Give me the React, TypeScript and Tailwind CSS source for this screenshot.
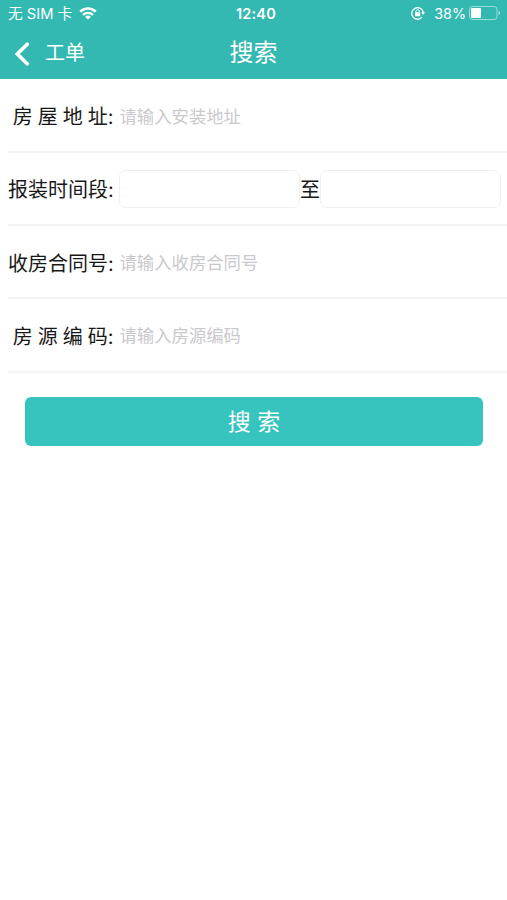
import React, { useState } from 'react';

function WifiIcon() {
  return (
    <svg viewBox="0 0 18 13" className="w-[18px] h-[13px]" fill="none" stroke="white" strokeWidth="2.4">
      <path d="M1.2 4.7a11 11 0 0 1 15.6 0" />
      <path d="M4 7.9a7.1 7.1 0 0 1 10 0" />
      <path d="M9 12.6 6.2 9.9a4 4 0 0 1 5.6 0Z" fill="white" stroke="none" />
    </svg>
  );
}

function RotationLockIcon() {
  return (
    <svg viewBox="0 0 14 14" className="w-[14px] h-[14px]" fill="none" stroke="white">
      <path d="M11 11.2a5.8 5.8 0 1 1 1.3-4.6" strokeWidth="1.3" />
      <path d="M10.2 6.2H14l-1.9 2.8Z" fill="white" stroke="none" />
      <rect x="4" y="6.2" width="5.2" height="4" rx="0.5" fill="white" stroke="none" />
      <path d="M5 6.4V5.2a1.6 1.6 0 0 1 3.2 0v1.2" strokeWidth="1" />
    </svg>
  );
}

function BatteryIcon() {
  return (
    <svg viewBox="0 0 32 14" className="w-8 h-[14px]" fill="none">
      <rect x="0.5" y="0.5" width="27.5" height="13" rx="3" stroke="white" strokeOpacity="0.5" />
      <rect x="2" y="2" width="10" height="10" rx="1" fill="white" />
      <path d="M29.6 4.8c1.8.6 1.8 3.8 0 4.4Z" fill="white" fillOpacity="0.6" />
    </svg>
  );
}

function StatusBar() {
  return (
    <div className="grid grid-cols-3 items-center h-[27px] pl-2 pr-[6px] text-[14.5px] leading-none">
      <div className="flex items-center gap-[7px]">
        <span className="pt-[2px] text-[14.7px] whitespace-pre">无 SIM 卡</span>
        <WifiIcon />
      </div>
      <span className="pl-[3px] pt-[2px] text-center font-semibold tracking-[0.2px]">12:40</span>
      <div className="flex items-center justify-end">
        <RotationLockIcon />
        <span className="ml-[9px] mr-[3px] pt-[2px] text-[14.3px]">38%</span>
        <BatteryIcon />
      </div>
    </div>
  );
}

interface RowProps {
  label: string;
  children: React.ReactNode;
}

function Row({ label, children }: RowProps) {
  return (
    <div className="ml-2 h-[73.3px] flex items-center border-b-2 border-[#f4f4f4]">
      <label className="w-[105.5px] shrink-0 pt-1 text-right text-[20px] leading-7 whitespace-pre [word-spacing:-0.6px]">{label}</label>
      {children}
    </div>
  );
}

const inputClass = 'ml-[6px] flex-1 min-w-0 h-9 pt-[2px] text-[17.35px] outline-none placeholder:text-[#c9c9cd]';
const dateClass = 'mt-px w-[181px] h-[38px] px-2 rounded-[7px] border-[1.5px] border-[#f0f0f0] text-[17px] outline-none';

export default function App() {
  const [address, setAddress] = useState('');
  const [start, setStart] = useState('');
  const [end, setEnd] = useState('');
  const [contract, setContract] = useState('');
  const [code, setCode] = useState('');

  return (
    <div className="min-h-screen bg-white text-[#181818] font-[Inter,'Noto_Sans_CJK_SC',sans-serif]">
      <header className="h-[79px] bg-[#33b9b1] text-white">
        <StatusBar />
        <div className="grid grid-cols-3 items-center h-[52px] pl-[15px] pr-[15px]">
          <button className="flex items-center gap-[15px] text-[20px] leading-none">
            <svg viewBox="0 0 15 24" className="w-[15px] h-6 mt-px" fill="none" stroke="white" strokeWidth="3.6" strokeLinecap="round">
              <path d="M12.2 2.2 2.4 12l9.8 9.8" />
            </svg>
            工单
          </button>
          <h1 className="pb-px text-center text-[24px] leading-none">搜索</h1>
        </div>
      </header>

      <form onSubmit={(e) => e.preventDefault()} className="pt-[0.4px]">
        <Row label="房 屋 地 址:">
          <input className={inputClass} value={address} onChange={(e) => setAddress(e.target.value)} placeholder="请输入安装地址" />
        </Row>
        <Row label="报装时间段:">
          <div className="ml-[5.5px] flex items-center">
            <input className={dateClass} value={start} onChange={(e) => setStart(e.target.value)} />
            <span className="pt-1 text-[20px] leading-7">至</span>
            <input className={dateClass} value={end} onChange={(e) => setEnd(e.target.value)} />
          </div>
        </Row>
        <Row label="收房合同号:">
          <input className={inputClass} value={contract} onChange={(e) => setContract(e.target.value)} placeholder="请输入收房合同号" />
        </Row>
        <Row label="房 源 编 码:">
          <input className={inputClass} value={code} onChange={(e) => setCode(e.target.value)} placeholder="请输入房源编码" />
        </Row>
        <button
          type="submit"
          className="block mt-6 ml-[25px] w-[458px] h-[49px] pt-[2px] rounded-[6px] bg-[#38c4be] text-white text-[23px] leading-none whitespace-pre"
        >
          搜 索
        </button>
      </form>
    </div>
  );
}
